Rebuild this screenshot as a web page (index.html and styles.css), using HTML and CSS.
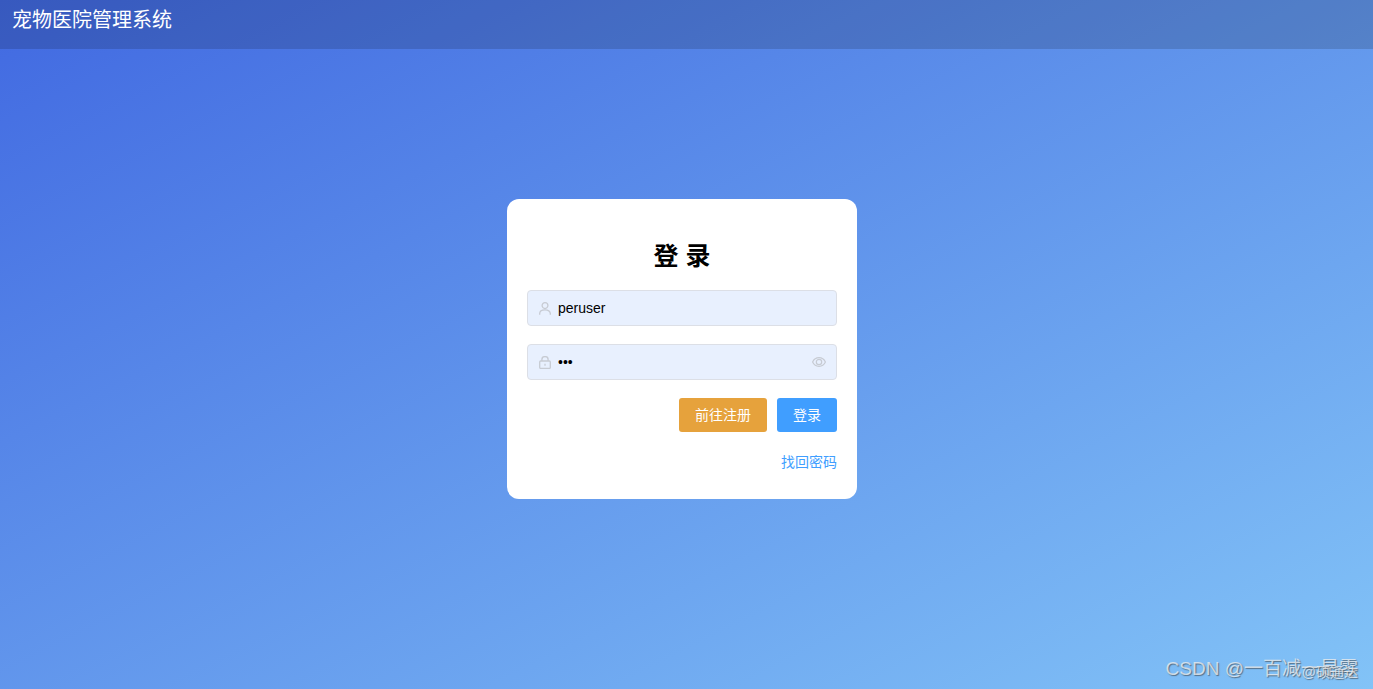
FILE: index.html
```html
<!DOCTYPE html>
<html lang="zh-CN">
<head>
<meta charset="utf-8">
<title>宠物医院管理系统</title>
<link rel="stylesheet" href="styles.css">
</head>
<body>
<div class="page">
  <header class="topbar">宠物医院管理系统</header>
  <main class="main">
    <form class="card">
      <h1 class="title">登 录</h1>
      <div class="field">
        <svg class="icon" viewBox="0 0 12 13" width="12" height="13" fill="none" stroke="currentColor" stroke-width="1.3"><circle cx="6" cy="3.600" r="2.900"/><path d="M.7 12.800V11.500C.7 9.200 2.800 7.900 6 7.900s5.300 1.300 5.300 3.600v1.300"/></svg>
        <span class="value">peruser</span>
      </div>
      <div class="field">
        <svg class="icon" viewBox="0 0 12 13" width="12" height="13" fill="none" stroke="currentColor" stroke-width="1.3"><rect x=".7" y="5" width="10.600" height="7.400" rx="1"/><path d="M2.900 5V3.400a3.100 2.800 0 0 1 6.200 0V5M6 7.800v2"/></svg>
        <span class="value">•••</span>
        <svg class="eye" viewBox="0 0 14 10" width="14" height="10" fill="none" stroke="currentColor" stroke-width="1.200"><path d="M.6 5C2 2 4.300.7 7 .7s5 1.300 6.400 4.300C12 8 9.700 9.300 7 9.300S2 8 .6 5z"/><circle cx="7" cy="5" r="2.700"/></svg>
      </div>
      <div class="actions">
        <button type="button" class="btn btn-warn">前往注册</button>
        <button type="button" class="btn btn-primary">登录</button>
      </div>
      <div class="links"><a class="link">找回密码</a></div>
    </form>
  </main>
  <div class="mark"><span class="mark-main">CSDN @一百减一是零</span><span class="mark-sub">@硕通达</span></div>
</div>
</body>
</html>
```
FILE: styles.css
```css
* { box-sizing: border-box; }
html, body { margin: 0; height: 100%; }
body {
  font-family: "Liberation Sans", "Noto Sans CJK SC", sans-serif;
  overflow: hidden;
}
.page {
  position: relative;
  height: 689px;
  display: flex;
  flex-direction: column;
  background: linear-gradient(to bottom right, #4169e1, #82c3f7);
}
.topbar {
  height: 49px;
  padding: 8px 12px 0;
  background: rgba(0, 0, 0, 0.15);
  color: #fff;
  font-size: 20px;
  line-height: 24px;
  font-family: "Liberation Serif", "Noto Sans CJK SC", serif;
}
.main {
  flex: 1;
  display: flex;
  justify-content: center;
  align-items: flex-start;
  padding: 150px 9px 0 0;
}
.card {
  width: 350px;
  height: 300px;
  padding: 20px;
  background: #fff;
  border-radius: 12px;
}
.title {
  margin: 20px 0 17px;
  height: 34px;
  font-size: 25px;
  line-height: 34px;
  font-weight: 700;
  color: #000;
  text-align: center;
}
.field {
  height: 36px;
  margin-bottom: 18px;
  padding: 0 10px 0 11px;
  display: flex;
  align-items: center;
  background: #e8f0fe;
  border: 1px solid #dcdfe6;
  border-radius: 4px;
  color: #c7cbd3;
}
.icon { flex: none; }
.value {
  flex: 1;
  margin-left: 7px;
  font-size: 14px;
  color: #000;
}
.eye { flex: none; }
.actions {
  display: flex;
  justify-content: flex-end;
  gap: 10px;
}
.btn {
  height: 34px;
  padding: 0 16px 2px;
  border: 0;
  border-radius: 3px;
  color: #fff;
  font-family: inherit;
  font-size: 14px;
}
.btn-warn { background: #e6a23c; }
.btn-primary { background: #409eff; }
.links {
  margin-top: 21px;
  text-align: right;
  font-size: 14px;
  line-height: 18px;
}
.link { color: #409eff; }
.mark {
  position: absolute;
  right: 15px;
  bottom: 8px;
  color: rgba(240, 240, 240, 0.75);
  text-shadow: 1px 1px 1px rgba(60, 60, 60, 0.6);
  white-space: nowrap;
}
.mark-main { font-size: 19px; line-height: 24px; }
.mark-sub {
  position: absolute;
  right: 0;
  bottom: 1px;
  font-size: 14px;
  line-height: 16px;
}
```
